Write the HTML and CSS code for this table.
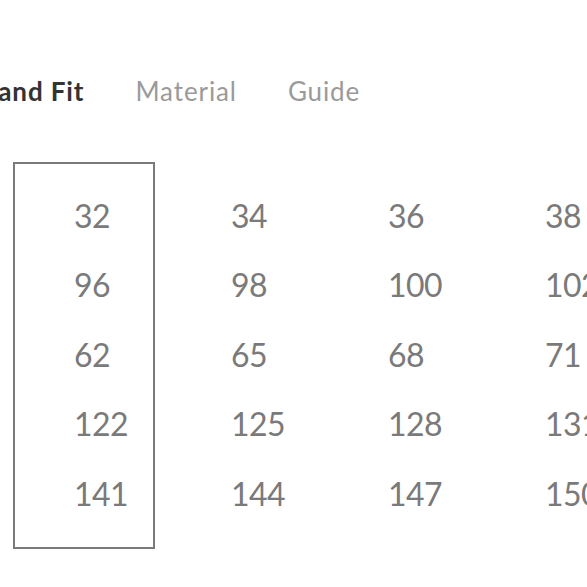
FILE: index.html
```html
<!DOCTYPE html>
<html>
<head>
<meta charset="utf-8">
<link rel="stylesheet" href="styles.css">
</head>
<body>
<div class="page">
  <nav class="tabs">
    <span class="tab active">Size and Fit</span>
    <span class="tab">Material</span>
    <span class="tab">Guide</span>
  </nav>
  <div class="table">
    <div class="col selected">
      <div class="cell">32</div>
      <div class="cell">96</div>
      <div class="cell">62</div>
      <div class="cell">122</div>
      <div class="cell">141</div>
    </div>
    <div class="col">
      <div class="cell">34</div>
      <div class="cell">98</div>
      <div class="cell">65</div>
      <div class="cell">125</div>
      <div class="cell">144</div>
    </div>
    <div class="col">
      <div class="cell">36</div>
      <div class="cell">100</div>
      <div class="cell">68</div>
      <div class="cell">128</div>
      <div class="cell">147</div>
    </div>
    <div class="col">
      <div class="cell">38</div>
      <div class="cell">102</div>
      <div class="cell">71</div>
      <div class="cell">131</div>
      <div class="cell">150</div>
    </div>
  </div>
</div>
</body>
</html>
```

FILE: styles.css
```css
html, body {
  margin: 0;
  padding: 0;
  background: #ffffff;
}
body {
  width: 587px;
  height: 587px;
  overflow: hidden;
  font-family: Lato, "Liberation Sans", sans-serif;
}
.page {
  display: flex;
  flex-direction: column;
}
.tabs {
  display: flex;
  gap: 51px;
  margin-left: -59px;
  padding-top: 74px;
  white-space: nowrap;
  font-size: 26px;
  line-height: 34px;
  letter-spacing: 0.9px;
}
.tab {
  color: #9a9a9a;
}
.tab.active {
  color: #333333;
  font-weight: 700;
}
.table {
  display: flex;
  gap: 15px;
  margin-top: 54px;
  margin-left: 13px;
  white-space: nowrap;
}
.col {
  flex: 0 0 142px;
  display: flex;
  flex-direction: column;
  padding: 16.5px 0 19px 59px;
  box-sizing: border-box;
  border: 2px solid transparent;
}
.col.selected {
  border-color: #7a7a7a;
}
.cell {
  height: 69.5px;
  line-height: 69.5px;
  font-size: 32px;
  color: #7a7a7a;
  letter-spacing: -0.5px;
}
```
